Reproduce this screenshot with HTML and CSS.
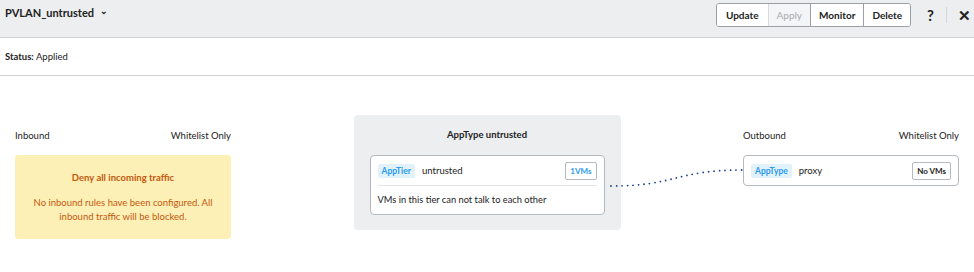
FILE: index.html
```html
<!DOCTYPE html>
<html lang="en">
<head>
  <meta charset="UTF-8">
  <title>PVLAN_untrusted</title>
  <link rel="stylesheet" href="styles.css">
</head>
<body>

  <div class="header">
    <div class="title">PVLAN_untrusted <span class="chevron">&#8964;</span></div>
    <div class="actions">
      <div class="btn-group">
        <button class="btn">Update</button>
        <button class="btn disabled">Apply</button>
        <button class="btn">Monitor</button>
        <button class="btn">Delete</button>
      </div>
      <span class="help">?</span>
      <span class="sep"></span>
      <span class="close">&#10005;</span>
    </div>
  </div>

  <div class="status"><b>Status:</b> Applied</div>

  <div class="main">
    <div class="column">
      <div class="col-head">
        <span>Inbound</span>
        <span>Whitelist Only</span>
      </div>
      <div class="warning">
        <div class="warning-title">Deny all incoming traffic</div>
        <div class="warning-text">No inbound rules have been configured. All inbound traffic will be blocked.</div>
      </div>
    </div>

    <div class="center">
      <div class="center-title">AppType untrusted</div>
      <div class="card">
        <div class="card-row">
          <span class="tag">AppTier</span>
          <span class="name">untrusted</span>
          <span class="count">1VMs</span>
        </div>
        <div class="card-note">VMs in this tier can not talk to each other</div>
      </div>
    </div>

    <div class="column">
      <div class="col-head">
        <span>Outbound</span>
        <span>Whitelist Only</span>
      </div>
      <div class="card">
        <div class="card-row">
          <span class="tag">AppType</span>
          <span class="name">proxy</span>
          <span class="count dark">No VMs</span>
        </div>
      </div>
    </div>

    <svg class="link" width="974" height="196" viewBox="0 76 974 196">
      <path d="M611 186 C 676 186, 676 170, 742 170" fill="none" stroke="#1d3f8c" stroke-width="1.8" stroke-linecap="round" stroke-dasharray="0 5.5"/>
    </svg>
  </div>

</body>
</html>
```

FILE: styles.css
```css
body {
  margin: 0;
  font-family: Lato, "Liberation Sans", sans-serif;
  color: #222;
  font-size: 9.5px;
  background: #fff;
}
.header {
  display: flex;
  align-items: center;
  justify-content: space-between;
  height: 37px;
  background: #eceef0;
  border-bottom: 1px solid #cfd3d6;
  padding: 0 0 0 5px;
}
.title {
  font-size: 11px;
  font-weight: bold;
  margin-top: -12px;
}
.chevron {
  font-size: 9px;
  margin-left: 3px;
  position: relative;
  top: -3px;
}
.actions {
  display: flex;
  align-items: center;
  margin-top: -7px;
}
.btn-group {
  display: flex;
  border: 1px solid #9aa0a6;
  border-radius: 3px;
  overflow: hidden;
  background: #fff;
}
.btn {
  font-family: inherit;
  font-size: 10px;
  font-weight: bold;
  color: #222;
  background: #fff;
  border: none;
  border-left: 1px solid #9aa0a6;
  height: 22px;
  padding: 0 8px;
}
.btn:first-child {
  border-left: none;
  padding: 0 9px;
}
.btn.disabled {
  background: #f4f5f6;
  color: #a8acb0;
  font-weight: normal;
  border-left-color: #d8dbde;
}
.help {
  font-size: 15px;
  font-weight: bold;
  margin-left: 16px;
}
.sep {
  width: 1px;
  height: 16px;
  background: #d3d6d9;
  margin: 0 11px 0 12px;
}
.close {
  font-size: 15px;
  font-weight: bold;
  margin-right: 3px;
}
.status {
  height: 37px;
  line-height: 37px;
  padding-left: 5px;
  border-bottom: 1px solid #cfd3d6;
  font-size: 9.5px;
}
.main {
  position: relative;
  display: flex;
  justify-content: space-between;
  align-items: flex-start;
  padding: 39px 15px 0;
}
.column {
  width: 216px;
}
.col-head {
  display: flex;
  justify-content: space-between;
  align-items: center;
  height: 40px;
  font-size: 9.5px;
}
.warning {
  background: #fdf0b6;
  border-radius: 3px;
  height: 84px;
  box-sizing: border-box;
  padding: 17px 16px 0;
  text-align: center;
  color: #c4580e;
  font-size: 9.5px;
}
.warning-title {
  font-weight: bold;
  margin-bottom: 13px;
}
.warning-text {
  line-height: 14px;
}
.center {
  width: 267px;
  height: 115px;
  box-sizing: border-box;
  background: #eceef0;
  border-radius: 4px;
  padding: 0 16px;
}
.center-title {
  height: 40px;
  line-height: 40px;
  text-align: center;
  font-weight: bold;
  font-size: 9.5px;
}
.card {
  background: #fff;
  border: 1px solid #b5babf;
  border-radius: 4px;
  padding: 0 7px;
}
.card-row {
  display: flex;
  align-items: center;
  height: 29px;
}
.tag {
  background: #e2f2fd;
  color: #2a9bef;
  font-size: 8.5px;
  font-weight: bold;
  border-radius: 2px;
  padding: 2px 4px;
}
.name {
  flex: 1;
  margin-left: 7px;
  font-size: 9.5px;
}
.count {
  border: 1px solid #b5babf;
  border-radius: 2px;
  font-size: 8px;
  font-weight: bold;
  color: #2a9bef;
  padding: 3px 4px;
}
.count.dark {
  color: #222;
}
.card-note {
  border-top: 1px solid #e3e5e7;
  height: 28px;
  line-height: 28px;
  font-size: 9.3px;
}
.link {
  position: absolute;
  left: 0;
  top: 0;
  pointer-events: none;
}
```
